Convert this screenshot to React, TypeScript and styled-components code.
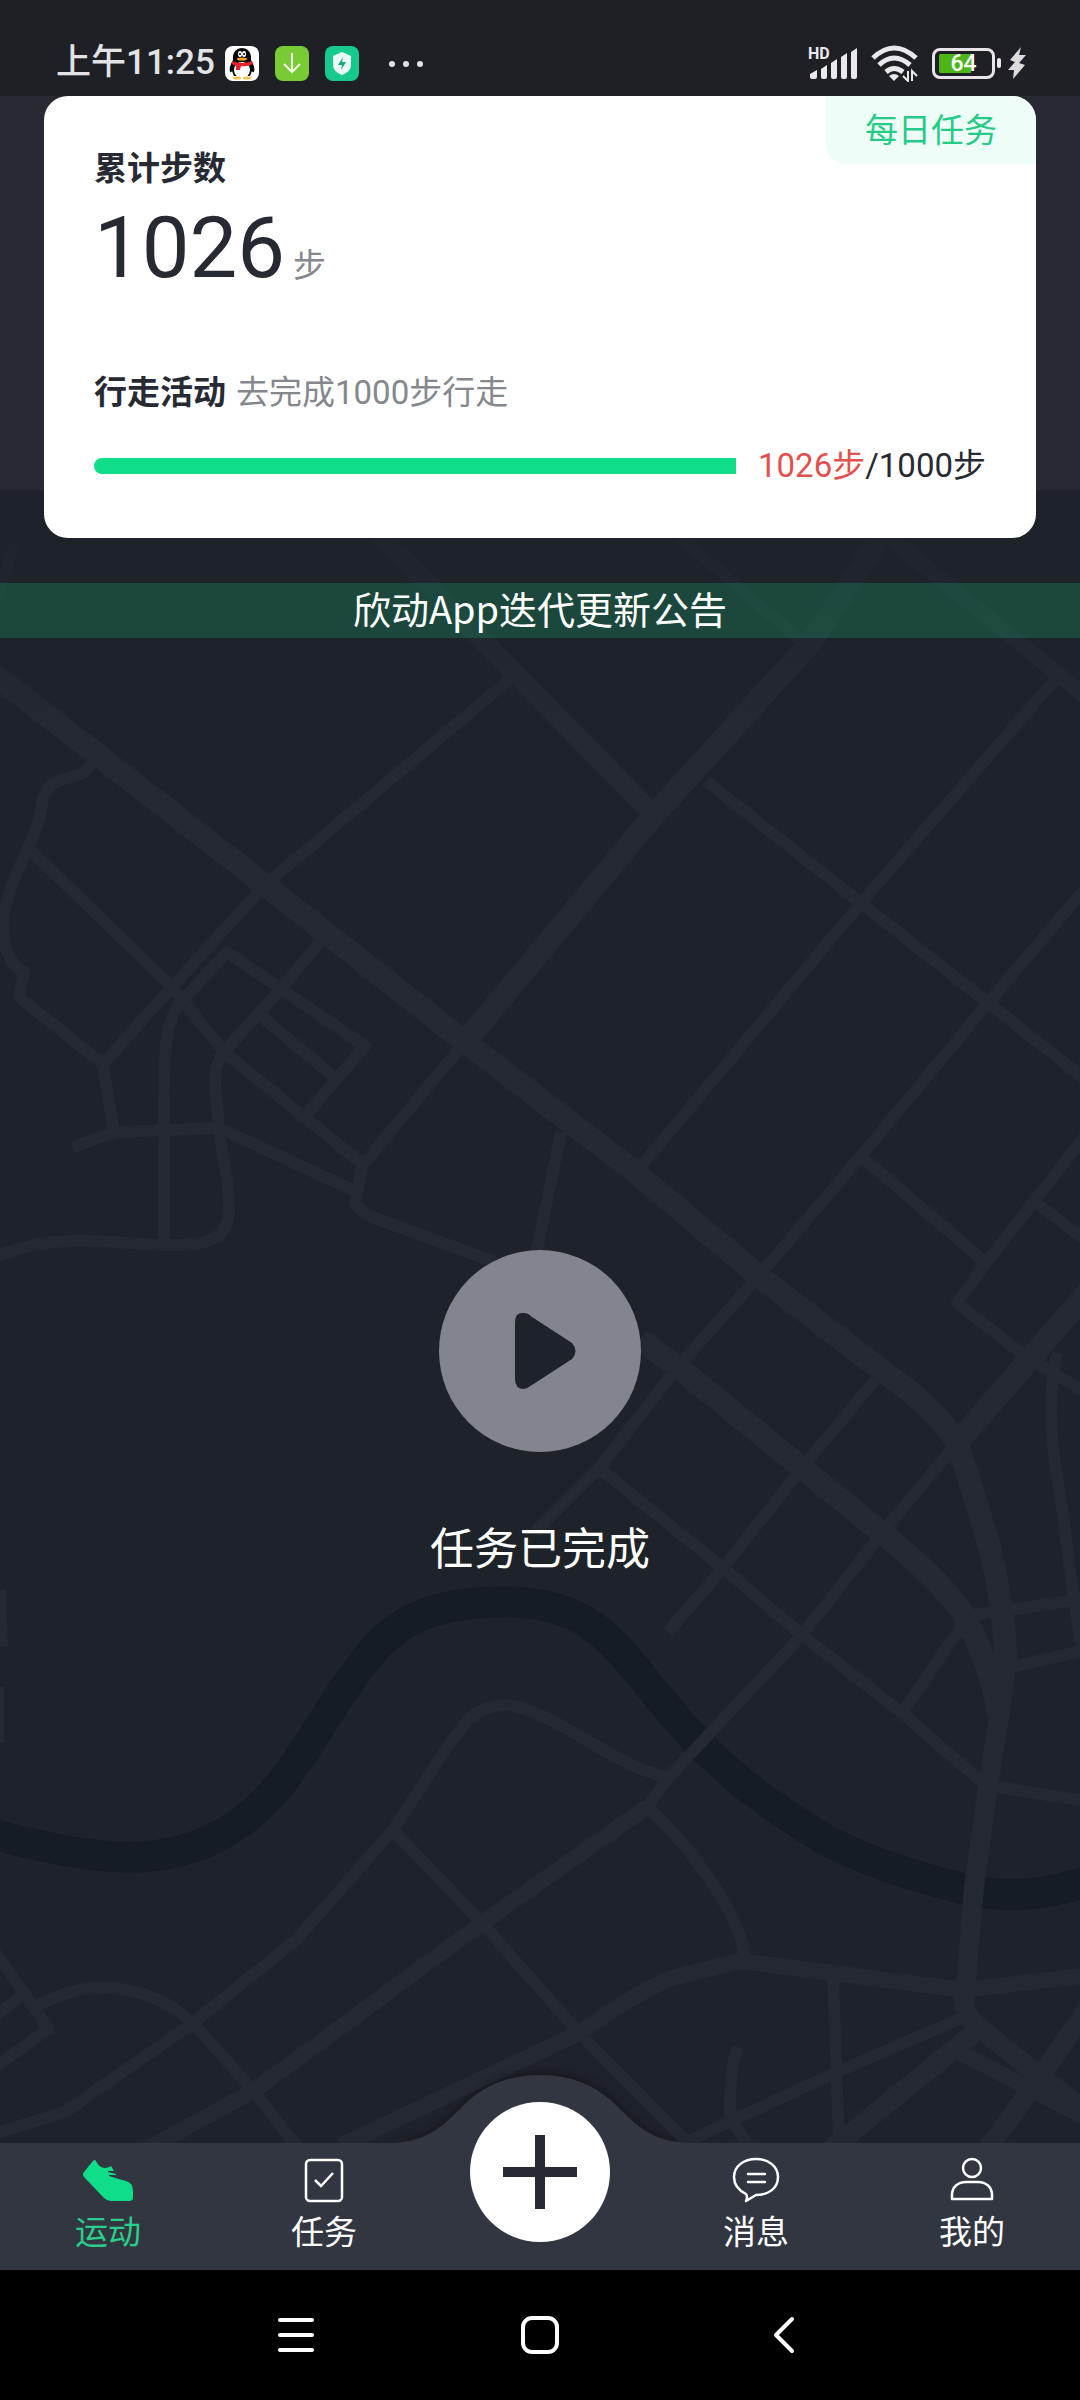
import React from 'react';
import styled, { createGlobalStyle } from 'styled-components';

const NUMERIC = 'Roboto, "Noto Sans CJK SC", sans-serif';

const GlobalStyle = createGlobalStyle`
  * { box-sizing: border-box; }
  body {
    margin: 0;
    background: #000;
    font-family: "Noto Sans CJK SC", "Noto Sans", sans-serif;
  }
  button { font: inherit; border: 0; padding: 0; background: none; color: inherit; cursor: pointer; }
  svg { display: block; flex: none; }
`;

const Screen = styled.div`
  min-height: 100vh;
  display: flex;
  flex-direction: column;
  background: #1e2229;
  color: #fff;
`;

/* ---------- status bar ---------- */

const StatusBar = styled.header`
  height: 96px;
  padding: 30px 54px 0 56px;
  display: flex;
  justify-content: space-between;
  background: #1e2026;
  color: #e3e3e6;
`;

const StatusGroup = styled.div<{ $gap: number }>`
  height: 66px;
  display: flex;
  align-items: center;
  gap: ${(p) => p.$gap}px;
`;

const Clock = styled.time`
  width: 153px;
  font-family: ${NUMERIC};
  font-size: 35px;
  font-weight: 500;
  line-height: 48px;
  white-space: nowrap;
`;

const Battery = styled.div`
  display: flex;
  align-items: center;
  gap: 2px;
`;

const BatteryBody = styled.span`
  width: 63px;
  height: 31px;
  padding: 3px 4px;
  border: 3px solid #e9e3ea;
  border-radius: 8px;
  background: linear-gradient(90deg, #4db518 32px, transparent 32px) content-box;
  color: #fff;
  font-family: ${NUMERIC};
  font-size: 23px;
  font-weight: 500;
  line-height: 20px;
  text-align: center;
`;

const BatteryTip = styled.span`
  width: 4px;
  height: 10px;
  border-radius: 2px;
  background: #e9e9eb;
`;

/* ---------- content ---------- */

const Content = styled.main`
  position: relative;
  flex: 1;
  display: flex;
  flex-direction: column;
`;

const MapLayer = styled.svg`
  position: absolute;
  inset: 0;
  width: 100%;
  height: 100%;
`;

const Hero = styled.section`
  position: relative;
  padding: 0 44px;
  background: linear-gradient(#272a33 394px, transparent 394px);
`;

const Card = styled.article`
  position: relative;
  padding: 48px 50px;
  border-radius: 24px;
  background: #fff;
  color: #272a33;
  overflow: hidden;
`;

const DailyTask = styled.button`
  && {
    position: absolute;
    top: 0;
    right: 0;
    height: 68px;
    padding: 0 39px 4px;
    border-radius: 0 0 0 20px;
    background: #effdf8;
    color: #26cb87;
    font-size: 33px;
    line-height: 62px;
  }
`;

const Title = styled.h2`
  margin: 0;
  font-size: 33px;
  font-weight: 700;
  line-height: 44px;
`;

const Total = styled.p`
  margin: 0;
  display: flex;
  align-items: baseline;
  gap: 8px;
  font-family: ${NUMERIC};
  font-size: 85px;
  line-height: 120px;
`;

const Unit = styled.span`
  color: #85878e;
  font-size: 33px;
  line-height: 44px;
`;

const Activity = styled.div`
  margin-top: 60px;
  display: flex;
  align-items: baseline;
  gap: 10px;
`;

const Hint = styled.span`
  color: #85878e;
  font-family: ${NUMERIC};
  font-size: 33px;
  line-height: 44px;
`;

const ProgressRow = styled.div`
  margin-top: 27px;
  display: flex;
  align-items: center;
  gap: 22px;
  font-family: ${NUMERIC};
  font-size: 33px;
  line-height: 48px;
  white-space: nowrap;
`;

const Track = styled.div`
  flex: 1;
  height: 16px;
  border-radius: 8px 0 0 8px;
  background: #eceef0;
  overflow: hidden;
`;

const Fill = styled.div`
  height: 100%;
  background: #10dd8a;
`;

const Current = styled.span`
  color: #e4504f;
`;

const Notice = styled.a`
  position: relative;
  margin-top: 45px;
  height: 55px;
  background: rgba(17, 220, 140, 0.2);
  color: #fff;
  font-size: 38px;
  line-height: 50px;
  text-align: center;
  text-decoration: none;
`;

const Stage = styled.section`
  position: relative;
  flex: 1;
  padding-top: 46px;
  display: flex;
  flex-direction: column;
  align-items: center;
  justify-content: center;
  gap: 62px;
`;

const PlayButton = styled.button`
  && {
    width: 202px;
    height: 202px;
    padding-left: 12px;
    border-radius: 50%;
    background: #82858f;
    display: grid;
    place-items: center;
  }
`;

const StageLabel = styled.p`
  margin: 0;
  font-size: 44px;
  line-height: 64px;
`;

/* ---------- tab bar ---------- */

const TabBar = styled.nav`
  position: relative;
  height: 127px;
  display: grid;
  grid-template-columns: repeat(5, 1fr);
  background: #323640;
`;

const Hump = styled.svg`
  position: absolute;
  left: 50%;
  bottom: 100%;
  transform: translateX(-50%);
  filter: drop-shadow(0 -2px 4px rgba(0, 0, 0, 0.35));
  clip-path: inset(-12px 0 0 0);
`;

const Tab = styled.a<{ $active?: boolean }>`
  padding-top: 13px;
  display: flex;
  flex-direction: column;
  align-items: center;
  gap: 6px;
  color: ${(p) => (p.$active ? '#2acd8a' : '#fff')};
  font-size: 33px;
  line-height: 40px;
  text-decoration: none;
`;

const AddButton = styled.button`
  && {
    position: relative;
    justify-self: center;
    margin-top: -41px;
    width: 140px;
    height: 140px;
    border-radius: 50%;
    background: #fff;
    display: grid;
    place-items: center;
  }
`;

/* ---------- system navigation ---------- */

const SystemNav = styled.footer`
  height: 130px;
  display: flex;
  justify-content: center;
  background: #000;
`;

const SystemButton = styled.button`
  && {
    width: 244px;
    display: grid;
    place-items: center;
  }
`;

/* ---------- map ---------- */

const RIVER =
  'M-20 1831 C60 1852 100 1858 138 1857 C210 1854 260 1816 293 1767 C320 1730 340 1688 378 1645 C410 1612 450 1602 506 1602 C590 1602 615 1644 660 1699 C716 1768 760 1800 826 1840 C880 1868 930 1880 964 1889 C1010 1900 1050 1894 1100 1878';

const ROADS: { w: number; d: string[] }[] = [
  {
    w: 23,
    d: [
      'M-20 664 L0 679 L265 885 L465 1042 L634 1171 L761 1278 L888 1375 Q935 1408 957 1443 Q975 1495 990 1550 Q1003 1600 1006 1657 L998 1717',
      'M885 530 L813 640 L654 815 L465 1042',
      'M1100 1278 L957 1443',
      'M640 1340 L678 1367 L802 1468 L882 1533 Q935 1575 961 1610 Q990 1660 999 1717',
    ],
  },
  {
    w: 20,
    d: [
      'M376 530 L482 640 L654 815',
      'M1006 1657 L999 1717 L988 1787 L974 1887 L966 1983 L964 2007 Q970 2022 985 2032 L1040 2077 L1100 2120',
      'M974 2033 L830 2150',
      'M1090 2005 L1040 2077 L985 2152',
    ],
  },
  {
    w: 16,
    d: [
      'M880 530 L1016 640 L1090 700',
      'M340 2146 L579 2033 Q640 1990 675 1977 L740 1961 L964 1990 L1090 1975',
      'M647 1807 L482 1923 L255 2090 L145 2150',
      'M961 2053 L1019 2083 L1090 2120',
    ],
  },
  {
    w: 12,
    d: [
      'M672 530 L806 645',
      'M465 1042 L362 1166 L355 1203 Q360 1211 372 1217 L495 1262',
      'M510 679 L265 885 L172 987 L103 1064 L114 1134',
      'M93 756 Q92 768 81 774 C60 780 46 782 43 800 Q38 830 28 848 C8 890 3 910 3 930 Q5 962 24 972 L19 997 L103 1064',
      'M28 848 L172 987 L224 1052 L365 1166',
      'M320 942 L279 991 L224 1052 C208 1072 218 1100 219 1128 C222 1160 230 1180 229 1215 C226 1240 205 1246 165 1245 C120 1243 105 1240 69 1241 Q30 1242 -10 1259',
      'M306 1115 L365 1046 L227 952 L180 1003 C166 1020 164 1050 164 1100 L164 1244',
      'M262 1017 L334 1077',
      'M73 1148 Q95 1138 117 1132 L219 1128 L355 1191',
      'M561 1132 L537 1250',
      'M637 1171 L861 903 L1054 681',
      'M706 781 L861 903 L988 1003 L1090 1083',
      'M1090 883 L988 1003 L861 1156 L757 1278 L678 1367 L599 1468 L535 1532',
      'M861 1156 L985 1262',
      'M1090 1130 L985 1264 L957 1303 L1026 1357 L1090 1395',
      'M1036 1203 L1090 1243',
      'M957 1443 L882 1533 L802 1635 L713 1730 L668 1778 L647 1807',
      'M599 1468 L723 1568 L802 1635 L902 1713 L985 1785 L1090 1802',
      'M875 1380 L802 1468 L723 1568 L668 1632',
      'M961 1627 L902 1713',
      'M974 1615 L1090 1598',
      'M1012 1667 L1090 1649',
      'M1057 1353 C1046 1400 1052 1450 1061 1500 L1074 1600 L1082 1650',
      'M668 1778 C620 1765 590 1740 551 1720 Q520 1705 503 1705 C475 1707 465 1720 440 1758 L393 1830 L296 1940 L193 2023 L65 2112 L-10 2135',
      'M393 1830 L482 1923 L579 2033 L690 2145',
      'M647 1807 C690 1845 745 1920 744 1960',
      'M833 1975 L839 2145',
      'M738 2047 Q729 2070 730 2117 L751 2150',
      'M680 2145 L826 2077 L964 2017',
      'M-10 1945 L34 2007 L48 2029 L-10 2071',
      'M-10 2020 L21 1996',
      'M36 2007 C90 1975 150 1985 193 2023 L255 2093 L300 2150',
      'M0 1590 L2 1647',
      'M-2 1687 L-2 1743',
      'M14 545 L-4 600',
    ],
  },
];

const CityMap = () => (
  <MapLayer viewBox="0 96 1080 2047" preserveAspectRatio="xMidYMid slice" aria-hidden="true">
    <defs>
      <linearGradient id="fade" x1="0" y1="0" x2="0" y2="1">
        <stop offset="0" stopColor="#1e2229" stopOpacity="0.9" />
        <stop offset="1" stopColor="#1e2229" stopOpacity="0" />
      </linearGradient>
    </defs>
    <rect x="0" y="96" width="1080" height="2047" fill="#1e2229" />
    <path d={RIVER} fill="none" stroke="#161c23" strokeWidth="31" />
    <g fill="none" stroke="#242931" strokeLinejoin="round">
      {ROADS.map((group) =>
        group.d.map((d) => <path key={d} d={d} strokeWidth={group.w} />),
      )}
    </g>
    <rect x="0" y="490" width="1080" height="240" fill="url(#fade)" />
  </MapLayer>
);

/* ---------- icons ---------- */

const PenguinIcon = () => (
  <svg width="34" height="35" viewBox="0 0 34 35">
    <rect width="34" height="35" rx="8" fill="#fff" />
    <path d="M8 14C7 6 12 2 17 2s10 4 9 12c3 5 4 9 3 12-1 1-2-1-2-1l-2 5H9l-2-5s-1 2-2 1c-1-3 0-7 3-12z" fill="#080808" />
    <ellipse cx="17" cy="24" rx="8" ry="8" fill="#fff" />
    <ellipse cx="12" cy="32" rx="4" ry="1.5" fill="#f5c04a" />
    <ellipse cx="22" cy="32" rx="4" ry="1.5" fill="#f5c04a" />
    <ellipse cx="15" cy="8" rx="2" ry="3" fill="#fff" />
    <ellipse cx="19" cy="8" rx="2" ry="3" fill="#fff" />
    <circle cx="15" cy="8" r="1" />
    <circle cx="19" cy="8" r="1" />
    <ellipse cx="17" cy="13" rx="5" ry="1.5" fill="#f5a914" />
    <path d="M7 15q10 4 20 0l1 3q-6 3-12 2l-1 4h-4v-4q-3-1-4-2z" fill="#e4232c" />
  </svg>
);

const DownloadIcon = () => (
  <svg width="34" height="35" viewBox="0 0 34 35">
    <rect width="34" height="35" rx="8" fill="#78cb35" />
    <path d="M17 7v19M9 18l8 8 8-8" fill="none" stroke="#f3fbe9" strokeWidth="2" />
  </svg>
);

const ShieldIcon = () => (
  <svg width="34" height="35" viewBox="0 0 34 35">
    <rect width="34" height="35" rx="8" fill="#17c98c" />
    <path d="M17 6l9 4v9c0 5-4 8-9 10-5-2-9-5-9-10v-9z" fill="#e9fbf4" />
    <path d="M18 11l-5 8h4l-1 5 5-8h-4z" fill="#14a878" />
  </svg>
);

const DotsIcon = () => (
  <svg width="49" height="8" viewBox="-13 0 49 8" fill="#e3e3e6">
    <circle cx="4" cy="5" r="3" />
    <circle cx="18" cy="5" r="3" />
    <circle cx="32" cy="5" r="3" />
  </svg>
);

const SignalIcon = () => (
  <svg width="50" height="40" viewBox="0 -3 50 40" fill="#e9e9eb">
    <text x="0" y="13" fontSize="16" fontWeight="700" fontFamily="Roboto, sans-serif">HD</text>
    <path d="M2 28l7-4v7q0 2-2 2H4q-2 0-2-2zM13 23l6-4v12q0 2-2 2h-2q-2 0-2-2zM23 17l6-4v18q0 2-2 2h-2q-2 0-2-2zM33 11l6-4v24q0 2-2 2h-2q-2 0-2-2zM43 6l6-4v29q0 2-2 2h-2q-2 0-2-2z" />
  </svg>
);

const WifiIcon = () => (
  <svg width="48" height="38" viewBox="0 0 48 38" fill="none" stroke="#e9e9eb" strokeWidth="5">
    <path d="M2 14q21-20 43 0M8 21q15-14 31 0M15 28q8-7 17 0" />
    <path d="M18 32q5-4 10 0l-5 5z" fill="#e9e9eb" stroke="none" />
    <path d="M37 27v10l-5-5M41 37V27l5 5" strokeWidth="2" />
  </svg>
);

const BoltIcon = () => (
  <svg width="18" height="32" viewBox="0 0 18 32" fill="#dcdcde">
    <path d="M13 0L2 13l5 2-7 8h6L5 32 17 18l-6-2 7-8h-7z" />
  </svg>
);

const PlayIcon = () => (
  <svg width="64" height="78" viewBox="0 0 64 78" fill="#1e2229">
    <path d="M1 10Q1 0 10 1q4 0 8 4l40 26q7 8 0 16L18 73q-4 3-8 4Q1 77 1 67z" />
  </svg>
);

const ShoeIcon = () => (
  <svg width="52" height="48" viewBox="0 0 52 48">
    <path d="M11 5q2-2 3 0 3 7 9 7 3 0 6-2l3 5h-6v1l8 2v1h-7v1q9 3 17 5 7 2 7 10v7q0 3-4 3H29q-4 0-7-3L2 21q-2-3 0-5z" fill="#10dd8a" />
  </svg>
);

const TaskIcon = () => (
  <svg width="40" height="48" viewBox="0 0 40 48" fill="none" stroke="#fff" strokeWidth="2.5">
    <rect x="2" y="4" width="36" height="41" rx="4" />
    <path d="M11 24l6 6 12-13" />
  </svg>
);

const MessageIcon = () => (
  <svg width="48" height="48" viewBox="0 0 48 48" fill="none" stroke="#fff" strokeWidth="2.5">
    <path d="M14 38C6 34 2 28 2 21 2 10 12 3 24 3s22 7 22 18-9 18-22 18l-10 6q2-4 0-7z" strokeLinejoin="round" />
    <path d="M16 18h17M16 26h17" strokeLinecap="round" />
  </svg>
);

const PersonIcon = () => (
  <svg width="44" height="48" viewBox="0 0 44 48" fill="none" stroke="#fff" strokeWidth="2.5">
    <circle cx="22" cy="12" r="9" />
    <path d="M2 43v-4c0-8 6-13 14-13h12c8 0 14 5 14 13v4z" strokeLinejoin="round" />
  </svg>
);

const PlusIcon = () => (
  <svg width="74" height="74" viewBox="0 0 74 74" stroke="#272a33" strokeWidth="10">
    <path d="M37 0v74M0 37h74" />
  </svg>
);

const MenuIcon = () => (
  <svg width="38" height="38" viewBox="0 0 38 38" stroke="#fff" strokeWidth="4" strokeLinecap="round">
    <path d="M3 4h32M3 19h32M3 34h32" />
  </svg>
);

const HomeIcon = () => (
  <svg width="38" height="38" viewBox="0 0 38 38" fill="none" stroke="#fff" strokeWidth="4">
    <rect x="2" y="2" width="34" height="34" rx="9" />
  </svg>
);

const BackIcon = () => (
  <svg width="22" height="38" viewBox="0 0 22 38" fill="none" stroke="#fff" strokeWidth="4" strokeLinecap="round" strokeLinejoin="round">
    <path d="M19 3L3 19l16 16" />
  </svg>
);

export default function App() {
  const steps = 1026;
  const goal = 1000;
  const percent = Math.min(100, (steps / goal) * 100);

  return (
    <Screen>
      <GlobalStyle />
      <StatusBar>
        <StatusGroup $gap={16}>
          <Clock>上午11:25</Clock>
          <PenguinIcon />
          <DownloadIcon />
          <ShieldIcon />
          <DotsIcon />
        </StatusGroup>
        <StatusGroup $gap={13}>
          <SignalIcon />
          <WifiIcon />
          <StatusGroup $gap={7}>
            <Battery>
              <BatteryBody>64</BatteryBody>
              <BatteryTip />
            </Battery>
            <BoltIcon />
          </StatusGroup>
        </StatusGroup>
      </StatusBar>

      <Content>
        <CityMap />
        <Hero>
          <Card>
            <DailyTask type="button">每日任务</DailyTask>
            <Title>累计步数</Title>
            <Total>
              {steps}
              <Unit>步</Unit>
            </Total>
            <Activity>
              <Title as="h3">行走活动</Title>
              <Hint>去完成{goal}步行走</Hint>
            </Activity>
            <ProgressRow>
              <Track role="progressbar" aria-label="行走活动" aria-valuenow={percent}>
                <Fill style={{ width: `${percent}%` }} />
              </Track>
              <span>
                <Current>{steps}步</Current>/{goal}步
              </span>
            </ProgressRow>
          </Card>
        </Hero>
        <Notice href="#notice">欣动App迭代更新公告</Notice>
        <Stage>
          <PlayButton type="button" aria-label="开始">
            <PlayIcon />
          </PlayButton>
          <StageLabel>任务已完成</StageLabel>
        </Stage>
      </Content>

      <TabBar>
        <Hump width="300" height="68" viewBox="0 0 300 68" aria-hidden="true">
          <path d="M0 68C35 67 50 54 72 32C92 11 118 0 150 0S208 11 228 32C250 54 265 67 300 68z" fill="#323640" />
        </Hump>
        <Tab href="#sport" $active>
          <ShoeIcon />
          运动
        </Tab>
        <Tab href="#task">
          <TaskIcon />
          任务
        </Tab>
        <AddButton type="button" aria-label="添加">
          <PlusIcon />
        </AddButton>
        <Tab href="#message">
          <MessageIcon />
          消息
        </Tab>
        <Tab href="#me">
          <PersonIcon />
          我的
        </Tab>
      </TabBar>

      <SystemNav>
        <SystemButton type="button" aria-label="菜单">
          <MenuIcon />
        </SystemButton>
        <SystemButton type="button" aria-label="主页">
          <HomeIcon />
        </SystemButton>
        <SystemButton type="button" aria-label="返回">
          <BackIcon />
        </SystemButton>
      </SystemNav>
    </Screen>
  );
}
